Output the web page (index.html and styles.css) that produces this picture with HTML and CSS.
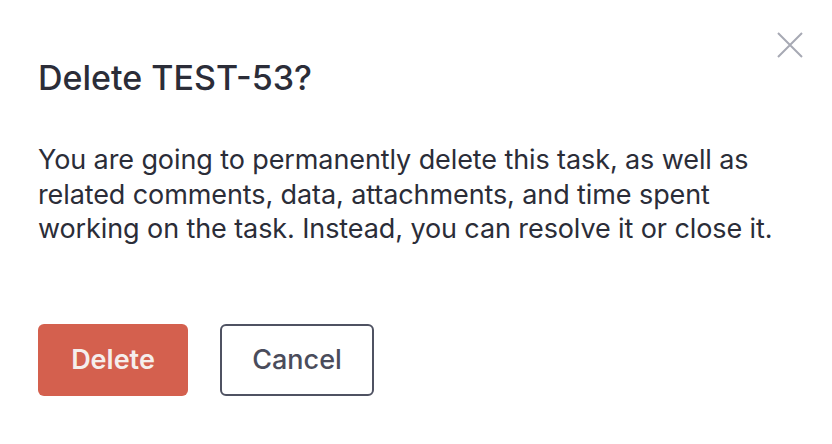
FILE: index.html
```html
<!DOCTYPE html>
<html>
<head>
<meta charset="utf-8">
<link rel="stylesheet" href="styles.css">
</head>
<body>
<div class="dialog">
  <button class="close" aria-label="Close">
    <svg width="26" height="26" viewBox="0 0 26 26"><path d="M1 1 L25 25 M25 1 L1 25" stroke="#a7a9b4" stroke-width="2" fill="none"/></svg>
  </button>
  <h1 class="title">Delete TEST-53?</h1>
  <p class="body">You are going to permanently delete this task, as well as related comments, data, attachments, and time spent working on the task. Instead, you can resolve it or close it.</p>
  <div class="actions">
    <button class="btn btn-delete">Delete</button>
    <button class="btn btn-cancel">Cancel</button>
  </div>
</div>
</body>
</html>
```
FILE: styles.css
```css
html, body { margin: 0; padding: 0; background: #fff; }
body { font-family: Inter, "Noto Sans", sans-serif; color: #2b2d38; }
.dialog { position: relative; width: 832px; height: 444px; box-sizing: border-box; padding: 58px 38px 0 38px; }
.close { position: absolute; top: 32px; right: 29px; border: 0; background: none; padding: 0; width: 26px; height: 26px; }
.title { margin: 0; font-size: 34px; font-weight: 500; line-height: 40px; letter-spacing: 0; }
.body { margin: 45px 0 0 0; font-size: 27px; line-height: 34.5px; width: 740px; letter-spacing: -0.1px; }
.actions { display: flex; gap: 32px; margin-top: 77px; }
.btn { height: 72px; border-radius: 6px; font-family: inherit; font-size: 27px; font-weight: 600; box-sizing: border-box; }
.btn-delete { width: 150px; background: #d4604e; color: #f5eeec; border: 0; }
.btn-cancel { width: 154px; background: #fff; color: #4a4c5b; border: 2px solid #4f5262; font-weight: 500; }
```
